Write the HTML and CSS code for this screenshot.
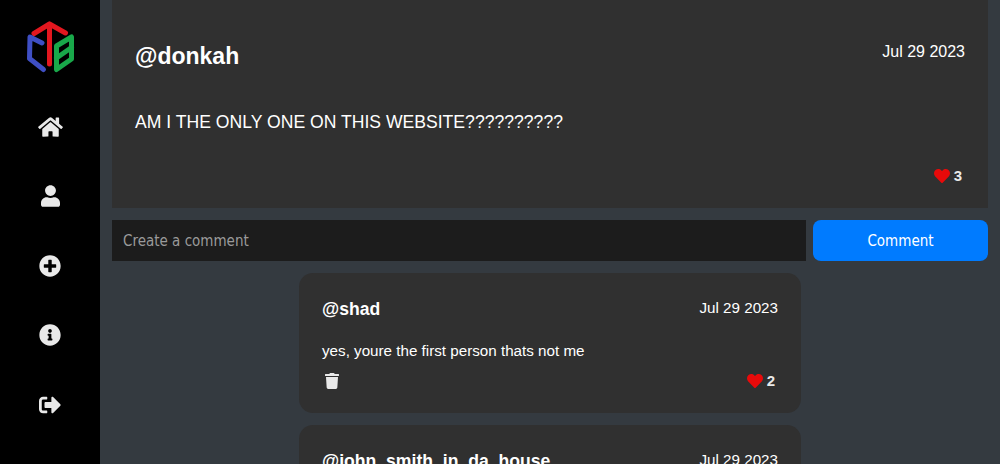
FILE: index.html
```html
<!DOCTYPE html>
<html lang="en">

<head>
    <meta charset="UTF-8">
    <meta name="viewport" content="width=device-width, initial-scale=1.0">
    <title>CTB</title>
    <link rel="stylesheet" href="styles.css">
</head>

<body>
    <div class="sidebar">
        <a class="logo" href="#">
            <svg viewBox="0 0 100 92" width="100" height="92">
                <g fill="none" stroke-width="5" stroke-linecap="round" stroke-linejoin="round">
                    <path stroke="#e3171f" d="M34 33.500 49.500 24 65.500 33M49.500 24V64" />
                    <path stroke="#3f4fc4" d="M42 43 30 37 29.500 58.500 43.500 69.500" />
                    <path stroke="#19a84a" d="M56.500 46 71.500 37V59L56.500 69.500ZM56.500 58 71.500 47.500" />
                </g>
            </svg>
        </a>
        <a class="nav-item" href="#">
            <svg viewBox="0 0 576 512" width="25" height="22"><path d="M280.37 148.26L96 300.11V464a16 16 0 0 0 16 16l112.06-.29a16 16 0 0 0 15.92-16V368a16 16 0 0 1 16-16h64a16 16 0 0 1 16 16v95.64a16 16 0 0 0 16 16.05L464 480a16 16 0 0 0 16-16V300L295.67 148.26a12.19 12.19 0 0 0-15.3 0zM571.6 251.47L488 182.56V44.05a12 12 0 0 0-12-12h-56a12 12 0 0 0-12 12v72.61L318.47 43a48 48 0 0 0-61 0L4.34 251.47a12 12 0 0 0-1.6 16.9l25.5 31A12 12 0 0 0 45.15 301l235.22-193.74a12.19 12.19 0 0 1 15.3 0L530.9 301a12 12 0 0 0 16.9-1.6l25.5-31a12 12 0 0 0-1.7-16.93z" /></svg>
        </a>
        <a class="nav-item" href="#">
            <svg viewBox="0 0 448 512" width="19" height="22"><path d="M224 256c70.7 0 128-57.3 128-128S294.7 0 224 0 96 57.3 96 128s57.3 128 128 128zm89.6 32h-16.7c-22.2 10.2-46.9 16-72.9 16s-50.6-5.8-72.9-16h-16.7C60.2 288 0 348.2 0 422.4V464c0 26.5 21.5 48 48 48h352c26.5 0 48-21.5 48-48v-41.6c0-74.2-60.2-134.4-134.4-134.400z" /></svg>
        </a>
        <a class="nav-item" href="#">
            <svg viewBox="0 0 512 512" width="22" height="22"><path d="M256 8C119 8 8 119 8 256s111 248 248 248 248-111 248-248S393 8 256 8zm144 276c0 6.6-5.4 12-12 12h-92v92c0 6.6-5.4 12-12 12h-56c-6.6 0-12-5.4-12-12v-92h-92c-6.600 0-12-5.4-12-12v-56c0-6.6 5.4-12 12-12h92v-92c0-6.6 5.4-12 12-12h56c6.6 0 12 5.4 12 12v92h92c6.6 0 12 5.4 12 12v56z" /></svg>
        </a>
        <a class="nav-item" href="#">
            <svg viewBox="0 0 512 512" width="22" height="22"><path d="M256 8C119.043 8 8 119.083 8 256c0 136.997 111.043 248 248 248s248-111.003 248-248C504 119.083 392.957 8 256 8zm0 110c23.196 0 42 18.804 42 42s-18.804 42-42 42-42-18.804-42-42 18.804-42 42-42zm56 254c0 6.627-5.373 12-12 12h-88c-6.627 0-12-5.373-12-12v-24c0-6.627 5.373-12 12-12h12v-64h-12c-6.627 0-12-5.373-12-12v-24c0-6.627 5.373-12 12-12h64c6.627 0 12 5.373 12 12v100h12c6.627 0 12 5.373 12 12v24z" /></svg>
        </a>
        <a class="nav-item" href="#">
            <svg viewBox="0 0 512 512" width="22" height="22"><path d="M497 273L329 441c-15 15-41 4.5-41-17v-96H152c-13.3 0-24-10.7-24-24v-96c0-13.3 10.7-24 24-24h136V88c0-21.4 25.9-32 41-17l168 168c9.3 9.4 9.3 24.6 0 34zM192 436v-40c0-6.6-5.4-12-12-12H96c-17.7 0-32-14.3-32-32V160c0-17.700 14.3-32 32-32h84c6.6 0 12-5.4 12-12V76c0-6.6-5.4-12-12-12H96c-53 0-96 43-96 96v192c0 53 43 96 96 96h84c6.6 0 12-5.4 12-12z" /></svg>
        </a>
    </div>

    <div class="main">
        <div class="post">
            <div class="post-head">
                <h2 class="post-user">@donkah</h2>
                <span class="post-date">Jul 29 2023</span>
            </div>
            <p class="post-text">AM I THE ONLY ONE ON THIS WEBSITE??????????</p>
            <div class="likes">
                <svg class="heart" viewBox="0 0 512 512" width="16" height="16"><path d="M462.3 62.6C407.5 15.9 326 24.3 275.7 76.2L256 96.5l-19.7-20.3C186.1 24.3 104.5 15.9 49.7 62.6c-62.8 53.6-66.1 149.8-9.9 207.9l193.5 199.800c12.5 12.9 32.8 12.9 45.3 0l193.5-199.8c56.3-58.1 53-154.3-9.8-207.9z" /></svg>
                <span>3</span>
            </div>
        </div>

        <form class="comment-form">
            <input class="comment-input" type="text" placeholder="Create a comment">
            <button class="comment-btn" type="button">Comment</button>
        </form>

        <div class="comments">
            <div class="comment">
                <div class="comment-head">
                    <h3 class="comment-user">@shad</h3>
                    <span class="comment-date">Jul 29 2023</span>
                </div>
                <p class="comment-text">yes, youre the first person thats not me</p>
                <div class="comment-foot">
                    <svg class="trash" viewBox="0 0 448 512" width="14" height="16"><path d="M432 32H312l-9.4-18.7A24 24 0 0 0 281.1 0H166.8a23.72 23.72 0 0 0-21.4 13.3L136 32H16A16 16 0 0 0 0 48v32a16 16 0 0 0 16 16h416a16 16 0 0 0 16-16V48a16 16 0 0 0-16-16zM53.2 467a48 48 0 0 0 47.9 45h245.8a48 48 0 0 0 47.9-45L416 128H32z" /></svg>
                    <div class="likes">
                        <svg class="heart" viewBox="0 0 512 512" width="16" height="16"><path d="M462.3 62.6C407.5 15.9 326 24.3 275.7 76.2L256 96.5l-19.7-20.3C186.1 24.3 104.5 15.9 49.7 62.6c-62.8 53.6-66.1 149.8-9.9 207.9l193.5 199.800c12.5 12.9 32.8 12.9 45.3 0l193.5-199.8c56.3-58.1 53-154.3-9.8-207.9z" /></svg>
                        <span>2</span>
                    </div>
                </div>
            </div>

            <div class="comment">
                <div class="comment-head">
                    <h3 class="comment-user">@john_smith_in_da_house</h3>
                    <span class="comment-date">Jul 29 2023</span>
                </div>
            </div>
        </div>
    </div>
</body>

</html>
```

FILE: styles.css
```css
html,
body {
    height: 100%;
}

body {
    font-family: "Liberation Sans", Arial, sans-serif;
    margin: 0;
    padding: 0;
    background-color: #343a40;
    color: #ffffff;
    display: flex;
    overflow: hidden;
}

/* Sidebar */
.sidebar {
    flex: 0 0 100px;
    background-color: #000000;
    display: flex;
    flex-direction: column;
    align-items: center;
}

.logo {
    display: block;
    height: 92px;
}

.logo svg {
    display: block;
}

.nav-item {
    height: 69.5px;
    flex: none;
    display: flex;
    align-items: center;
    justify-content: center;
    fill: #e9e9e9;
}

/* Post */
.main {
    flex: 1;
    min-width: 0;
    padding: 0 12px;
}

.post {
    background-color: #303030;
    height: 208px;
    box-sizing: border-box;
    padding: 42px 23px 0;
    display: flex;
    flex-direction: column;
}

.post-head {
    display: flex;
    justify-content: space-between;
    align-items: flex-start;
}

.post-user {
    margin: 0;
    font-size: 23px;
    line-height: 28px;
    font-weight: bold;
}

.post-date {
    font-size: 16px;
    line-height: 20px;
}

.post-text {
    margin: 38px 0 0;
    font-size: 17.6px;
    line-height: 28px;
}

.likes {
    display: flex;
    align-items: center;
    gap: 4px;
    font-size: 15px;
    font-weight: bold;
    color: #e9e9e9;
    margin-right: 3px;
}

.post .likes {
    margin-top: auto;
    margin-bottom: 24px;
    align-self: flex-end;
}

.heart {
    fill: #e80a0a;
}

/* Comment form */
.comment-form {
    display: flex;
    gap: 7px;
    margin-top: 12px;
}

.comment-input {
    flex: 1;
    min-width: 0;
    height: 41px;
    box-sizing: border-box;
    padding: 0 11px;
    border: none;
    background-color: #1c1c1c;
    color: #ffffff;
    font-family: "DejaVu Sans", sans-serif;
    font-stretch: condensed;
    font-size: 15px;
}

.comment-input::placeholder {
    color: #9a9a9a;
    opacity: 1;
}

.comment-btn {
    flex: 0 0 175px;
    height: 41px;
    border: none;
    border-radius: 8px;
    background-color: #007bff;
    color: #ffffff;
    font-family: "DejaVu Sans", sans-serif;
    font-stretch: condensed;
    font-size: 15px;
}

/* Comments */
.comments {
    width: 502px;
    margin: 12px auto 0;
    display: flex;
    flex-direction: column;
    gap: 12px;
}

.comment {
    background-color: #303030;
    border-radius: 14px;
    height: 140px;
    flex: none;
    box-sizing: border-box;
    padding: 25px 23px 0;
}

.comment-head {
    display: flex;
    justify-content: space-between;
    align-items: flex-start;
}

.comment-user {
    margin: 0;
    font-size: 17.6px;
    line-height: 22px;
    font-weight: bold;
}

.comment-date {
    font-size: 15.2px;
    line-height: 20px;
}

.comment-text {
    margin: 21px 0 0;
    font-size: 15.2px;
    line-height: 20px;
}

.comment-foot {
    display: flex;
    justify-content: space-between;
    align-items: center;
    margin-top: 11px;
    padding-left: 3px;
}

.trash {
    fill: #e9e9e9;
}
```
